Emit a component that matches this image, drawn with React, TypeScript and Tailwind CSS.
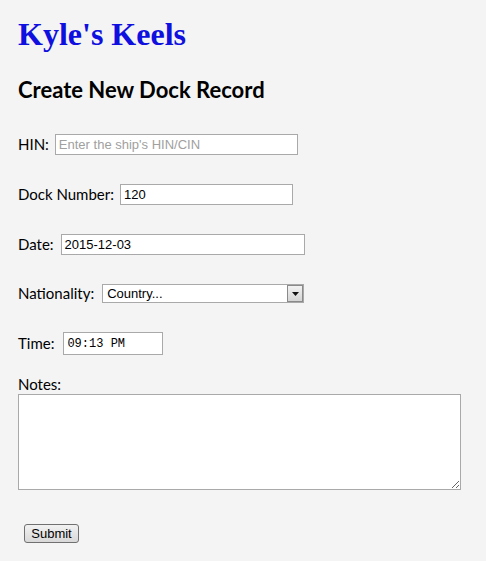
import React from "react";

const label = "text-[15px] text-black [font-family:Lato,'Open_Sans',sans-serif]";
const field =
  "h-[21px] border border-[#a9a9a9] bg-white px-[3px] text-[13px] text-black outline-none [font-family:'Liberation_Sans',Arial,sans-serif]";

export default function App() {
  return (
    <div className="min-h-[561px] w-full bg-[#f4f4f4] pl-[18px] pr-[25px]">
      {/* Heading */}
      <h1 className="pt-[14px] text-[32px] leading-[40px] font-bold text-[#0f0fdf] [font-family:'Liberation_Serif','Times_New_Roman',serif]">
        Kyle's Keels
      </h1>
      <h2 className="mt-[23px] text-[22px] leading-[25px] font-bold text-black [font-family:Lato,'Open_Sans',sans-serif]">
        Create New Dock Record
      </h2>

      <form className="flex flex-col" onSubmit={(e) => e.preventDefault()}>
        <div className="mt-[32px] flex items-center h-[21px]">
          <label className={label}>HIN:</label>
          <input
            className={`${field} ml-[6px] w-[243px] placeholder:text-[#a0a0a0]`}
            placeholder="Enter the ship's HIN/CIN"
          />
        </div>

        <div className="mt-[29px] flex items-center h-[21px]">
          <label className={label}>Dock Number:</label>
          <input className={`${field} ml-[6px] w-[173px]`} defaultValue="120" />
        </div>

        <div className="mt-[29px] flex items-center h-[21px]">
          <label className={label}>Date:</label>
          <input className={`${field} ml-[7px] w-[244px]`} defaultValue="2015-12-03" />
        </div>

        <div className="mt-[29px] flex items-center h-[19px]">
          <label className={label}>Nationality:</label>
          <div className="relative ml-[8px] flex h-[19px] w-[202px] items-center border border-[#a9a9a9] bg-white">
            <span className="pl-[4px] text-[13px] text-black [font-family:'Liberation_Sans',Arial,sans-serif]">
              Country...
            </span>
            <span className="absolute right-0 top-0 flex h-[17px] w-[16px] items-center justify-center border border-[#8a8a8a] bg-gradient-to-b from-[#f2f2f2] to-[#d4d4d4]">
              <svg width="7" height="4" viewBox="0 0 7 4">
                <path d="M0 0h7L3.5 4z" fill="#111" />
              </svg>
            </span>
          </div>
        </div>

        <div className="mt-[29px] flex items-center h-[23px]">
          <label className={label}>Time:</label>
          <input
            className="ml-[9px] h-[23px] w-[100px] border border-[#a9a9a9] bg-white px-[3px] text-[12px] text-black outline-none [font-family:'Liberation_Mono','Courier_New',monospace]"
            defaultValue="09:13 PM"
          />
        </div>

        <label className={`${label} mt-[20px] leading-[18px]`}>Notes:</label>
        <textarea className="mt-[1px] h-[96px] w-[443px] border border-[#a9a9a9] bg-white outline-none" />

        <div className="mt-[30px] pl-[6px]">
          <button
            type="submit"
            className="h-[19px] w-[55px] rounded-[3px] border border-[#707070] bg-gradient-to-b from-[#f2f2f2] to-[#d8d8d8] text-[13px] leading-[15px] text-black [font-family:'Liberation_Sans',Arial,sans-serif]"
          >
            Submit
          </button>
        </div>
      </form>
    </div>
  );
}
